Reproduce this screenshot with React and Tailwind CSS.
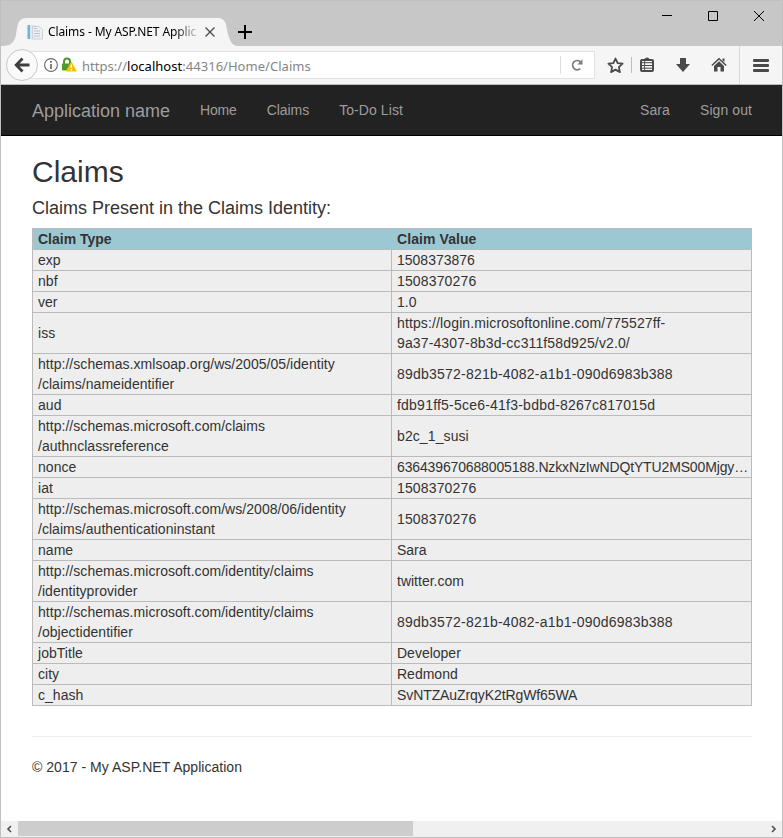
import React from "react";

const GUID = "tracking-[0.22px]";
const URL_TEXT = "tracking-[0.04px]";

const claims = [
  [["exp"], ["1508373876"]],
  [["nbf"], ["1508370276"], "tracking-[0.15px]"],
  [["ver"], ["1.0"]],
  [["iss"], ["https://login.microsoftonline.com/775527ff-", "9a37-4307-8b3d-cc311f58d925/v2.0/"], "tracking-[0.13px]"],
  [["http://schemas.xmlsoap.org/ws/2005/05/identity", "/claims/nameidentifier"], ["89db3572-821b-4082-a1b1-090d6983b388"], GUID],
  [["aud"], ["fdb91ff5-5ce6-41f3-bdbd-8267c817015d"], GUID],
  [["http://schemas.microsoft.com/claims", "/authnclassreference"], ["b2c_1_susi"], "tracking-[0.1px]"],
  [["nonce"], ["636439670688005188.NzkxNzIwNDQtYTU2MS00Mjgy…"], "tracking-[-0.14px]"],
  [["iat"], ["1508370276"], "tracking-[0.15px]"],
  [["http://schemas.microsoft.com/ws/2008/06/identity", "/claims/authenticationinstant"], ["1508370276"], "tracking-[0.15px]"],
  [["name"], ["Sara"]],
  [["http://schemas.microsoft.com/identity/claims", "/identityprovider"], ["twitter.com"]],
  [["http://schemas.microsoft.com/identity/claims", "/objectidentifier"], ["89db3572-821b-4082-a1b1-090d6983b388"], GUID],
  [["jobTitle"], ["Developer"]],
  [["city"], ["Redmond"]],
  [["c_hash"], ["SvNTZAuZrqyK2tRgWf65WA"], "tracking-[-0.09px]"],
];

function TitleBar() {
  return (
    <div className="flex h-[46px] items-end bg-[#c7c7c7] border-t border-[#c0c0c0]">
      <div className="relative h-7 w-[230px] shrink-0">
        <svg className="absolute left-0 top-0" width="240" height="28" viewBox="0 0 240 28">
          <path d="M0 28C8 28 13 26 15 17C17 5 17 0 27 0H216C226 0 225 8 227 16C229 23 231 28 237 28Z" fill="#f5f5f5" />
        </svg>
        <div className="relative flex h-7 items-center pl-[26px]">
          <svg width="16" height="16" viewBox="0 0 16 16">
            <path d="M0.5 1H3V15H0.5Z" fill="#6fb3dd" />
            <path d="M3 1H9V15H3Z" fill="#dfe6ee" />
            <path d="M5.5 2.5H12L15.5 5.500V15H5.500Z" fill="#eef0f3" stroke="#c3c9d1" strokeWidth=".8" />
            <path d="M7 4.500H10M7 7H13M7 9.500H13M7 12H13" stroke="#b9c2ce" />
          </svg>
          <span className="ml-[5px] block w-[151px] whitespace-nowrap font-['Noto_Sans',sans-serif] text-[12px] leading-4 text-black tracking-[-0.1px] [mask-image:linear-gradient(to_right,black_127px,transparent_154px)]">
            Claims - My ASP.NET Applic
          </span>
          <svg className="ml-[5px]" width="12" height="12" viewBox="0 0 12 12">
            <path d="M1.500 1.500L10.500 10.500M10.500 1.500L1.500 10.500" stroke="#4a4a4a" strokeWidth="1.300" />
          </svg>
        </div>
      </div>
      <svg className="mb-[7px] ml-[7px]" width="14" height="14" viewBox="0 0 14 14">
        <path d="M0 7H14M7 0V14" stroke="#000" strokeWidth="2" />
      </svg>
      <div className="mb-6 ml-auto mr-[17px] flex items-center gap-[35px]">
        <svg width="11" height="11" viewBox="0 0 11 11"><path d="M0 4.500H10" stroke="#000" /></svg>
        <svg width="11" height="11" viewBox="0 0 11 11" fill="none"><path d="M.5 .5H9.500V9.500H.5Z" stroke="#000" /></svg>
        <svg width="11" height="11" viewBox="0 0 11 11"><path d="M0 0L10 10M10 0L0 10" stroke="#000" /></svg>
      </div>
    </div>
  );
}

function Toolbar() {
  return (
    <div className="flex h-[39px] items-center border-b border-[#b9bcb9] bg-[#f5f5f5]">
      <div className="relative z-10 ml-[5px] flex size-8 shrink-0 items-center justify-center rounded-full border border-[#c9c9c9] bg-[#fafafa]">
        <svg width="16" height="16" viewBox="0 0 16 16" fill="none" stroke="#3f3f3f" strokeWidth="2.800">
          <path d="M15.500 8H3M8.500 1.500L2.200 8L8.500 14.500" />
        </svg>
      </div>
      <div className="-ml-4 flex h-7 w-[573px] shrink-0 items-center border border-l-0 border-[#e2e2e2] bg-white pl-[21px]">
        <svg width="16" height="16" viewBox="0 0 16 16">
          <circle cx="8" cy="8" r="6.400" fill="none" stroke="#6a6a6a" strokeWidth="1.100" />
          <path d="M8 7V12" stroke="#5a5a5a" strokeWidth="1.500" />
          <circle cx="8" cy="4.700" r="1" fill="#5a5a5a" />
        </svg>
        <svg className="ml-0.5" width="16" height="16" viewBox="0 0 16 16">
          <path d="M3 7V4.500a3 3 0 0 1 6 0V7" fill="none" stroke="#4a9b28" strokeWidth="2" />
          <rect x="1" y="6.500" width="9.500" height="7" rx=".8" fill="#4a9b28" />
          <path d="M10.300 5.200L15.200 14H5.400Z" fill="#ffbf00" stroke="#ffbf00" strokeWidth="1" strokeLinejoin="round" />
          <path d="M10.300 7.500V11M10.300 12V13.400" stroke="#fff" strokeWidth="1.300" />
        </svg>
        <span className="ml-[5px] mt-0.5 whitespace-nowrap font-['Noto_Sans',sans-serif] text-[13px] leading-5 tracking-[0.03px] text-[#858585]">
          https://<span className="text-black">localhost</span>:44316/Home/Claims
        </span>
        <div className="ml-auto flex h-[18px] w-[34px] items-center justify-center border-l border-[#dedede] pr-0.5">
          <svg width="12" height="12" viewBox="0 0 12 12">
            <path d="M9.300 9.600A4.600 4.600 0 1 1 9.300 2.700" fill="none" stroke="#7d7d7d" strokeWidth="1.800" />
            <path d="M11.500 .3V5.400H6.400Z" fill="#7d7d7d" />
          </svg>
        </div>
      </div>
      <svg className="ml-3 shrink-0" width="17" height="17" viewBox="0 0 17 17">
        <path d="M8.500 1.500L10.600 6.100L15.600 6.700L11.900 10.100L12.900 15.100L8.500 12.600L4.100 15.100L5.100 10.100L1.400 6.700L6.400 6.100Z" fill="none" stroke="#4a4a4a" strokeWidth="1.800" strokeLinejoin="round" />
      </svg>
      <div className="ml-[7px] h-4 w-px shrink-0 bg-[#bdbdbd]" />
      <svg className="ml-[7px] shrink-0" width="16" height="16" viewBox="0 0 16 16">
        <rect x="2" y="3" width="12" height="11" rx="1" fill="none" stroke="#4a4a4a" strokeWidth="2" />
        <path d="M4 3.500C5 3.500 5.500 .5 8 .5S11 3.500 12 3.500Z" fill="#4a4a4a" />
        <path d="M3 8.500H13M3 11.200H13M3 5.700H13" stroke="#4a4a4a" strokeWidth="1" />
        <path d="M5.600 4V13" stroke="#4a4a4a" strokeWidth=".9" />
      </svg>
      <svg className="ml-5 shrink-0" width="16" height="16" viewBox="0 0 16 16">
        <path d="M5 1.500Q5 1 5.500 1H10.500Q11 1 11 1.500V7H15L8 15L1 7H5Z" fill="#4a4a4a" />
      </svg>
      <svg className="ml-5 shrink-0" width="16" height="16" viewBox="0 0 16 16">
        <path d="M.8 8.500L8 1.800L15.200 8.500" fill="none" stroke="#4a4a4a" strokeWidth="1.500" />
        <path d="M11.500 1.500H13.500V5L11.500 3.500Z" fill="#4a4a4a" />
        <path d="M8 4.300L13 9V14.500H9.500V10H6.500V14.500H3V9Z" fill="#4a4a4a" />
      </svg>
      <div className="ml-3 h-full w-px bg-[#dadada]" />
      <div className="ml-[13px] flex flex-col gap-0.5">
        <div className="h-[3px] w-4 rounded-[1px] bg-[#4a4a4a]" />
        <div className="h-[3px] w-4 rounded-[1px] bg-[#4a4a4a]" />
        <div className="h-[3px] w-4 rounded-[1px] bg-[#4a4a4a]" />
      </div>
    </div>
  );
}

function Cell({ lines, spacing = "tracking-normal" }) {
  return (
    <div className={"flex flex-col justify-center border-b border-r border-[#bbb] px-[5px] " + spacing}>
      {lines.map((line) => (
        <span key={line} className="block whitespace-nowrap">{line}</span>
      ))}
    </div>
  );
}

function ClaimsTable() {
  return (
    <div className="mt-[10px] w-[720px] border-l border-t border-[#bbb] bg-[#eee]">
      <div className="grid grid-cols-[359px_360px] bg-[#9cc8d4] font-bold">
        <Cell lines={["Claim Type"]} />
        <Cell lines={["Claim Value"]} spacing="tracking-[0.08px]" />
      </div>
      {claims.map(([type, value, spacing]) => (
        <div key={type.join("")} className="grid grid-cols-[359px_360px]">
          <Cell lines={type} spacing={URL_TEXT} />
          <Cell lines={value} spacing={spacing} />
        </div>
      ))}
    </div>
  );
}

export default function App() {
  return (
    <div className="flex h-[838px] w-[783px] flex-col overflow-hidden border-x border-b border-[#c0c0c0] bg-white font-['Liberation_Sans',Arial,sans-serif] text-[14px] leading-5 text-[#333]">
      <TitleBar />
      <Toolbar />
      <nav className="flex h-[51px] shrink-0 items-center border-b border-black bg-[#222] pl-[31px] pr-[30px] text-[#9d9d9d]">
        <span className="mt-0.5 text-[18px]">Application name</span>
        <span className="ml-[30px] tracking-[-0.2px]">Home</span>
        <span className="ml-[30px] tracking-[-0.05px]">Claims</span>
        <span className="ml-[30px] tracking-[0.08px]">To-Do List</span>
        <span className="ml-auto tracking-[0.1px]">Sara</span>
        <span className="ml-[30px] tracking-[0.08px]">Sign out</span>
      </nav>
      <main className="flex-1 pl-[31px]">
        <h2 className="mt-[19px] text-[30px] leading-[33px]">Claims</h2>
        <h4 className="mt-[10px] text-[18px] leading-5">Claims Present in the Claims Identity:</h4>
        <ClaimsTable />
        <hr className="mt-[30px] w-[720px] border-[#eee]" />
        <p className="mt-5 tracking-[0.03px]">© 2017 - My ASP.NET Application</p>
      </main>
      <div className="flex h-4 items-center bg-[#f0f0f0]">
        <div className="flex w-[17px] justify-center">
          <svg width="7" height="8" viewBox="0 0 7 8"><path d="M5 1L2 4L5 7" fill="none" stroke="#505050" strokeWidth="1.600" /></svg>
        </div>
        <div className="h-[15px] w-[395px] self-start bg-[#cdcdcd]" />
        <div className="ml-auto flex w-[17px] justify-center">
          <svg width="7" height="8" viewBox="0 0 7 8"><path d="M2 1L5 4L2 7" fill="none" stroke="#505050" strokeWidth="1.600" /></svg>
        </div>
      </div>
    </div>
  );
}
